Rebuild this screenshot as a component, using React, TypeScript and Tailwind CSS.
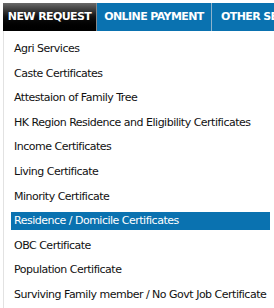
export default function App() {
  const items = [
    "Agri Services",
    "Caste Certificates",
    "Attestaion of Family Tree",
    "HK Region Residence and Eligibility Certificates",
    "Income Certificates",
    "Living Certificate",
    "Minority Certificate",
    "Residence / Domicile Certificates",
    "OBC Certificate",
    "Population Certificate",
    "Surviving Family member / No Govt Job Certificate",
  ]
  const active = 7

  return (
    <div className="w-[274px] h-[308px] overflow-hidden bg-white pt-[3px] pl-[3px] font-['DejaVu_Sans',Verdana,sans-serif]">
      <div className="flex h-[28px] w-[300px] text-[11px] font-bold text-white whitespace-nowrap tracking-[-0.6px]">
        <div className="w-[94px] shrink-0 flex items-center justify-center bg-gradient-to-b from-[#6a6a6a] via-[#111] to-[#000] border-r border-[#888]">
          NEW REQUEST
        </div>
        <div className="w-[115px] shrink-0 flex items-center justify-center bg-[#0a72b0] border-r border-[#8fb3cc]">
          ONLINE PAYMENT
        </div>
        <div className="w-[120px] shrink-0 flex items-center pl-[9px] bg-[#0a72b0]">OTHER SERVICES</div>
      </div>
      <div className="border-l border-[#e2e2e2] pl-[7px] pr-[4px] pt-[6px] text-[11px] text-[#111] tracking-[-0.5px]">
        {items.map((t, i) => (
          <div key={t} className="h-[24.6px] flex items-center">
            <div
              className={
                "h-[18px] w-full flex items-center pl-[3px] whitespace-nowrap " +
                (i === active ? "bg-[#0a72b0] text-white" : "")
              }
            >
              {t}
            </div>
          </div>
        ))}
      </div>
    </div>
  )
}
